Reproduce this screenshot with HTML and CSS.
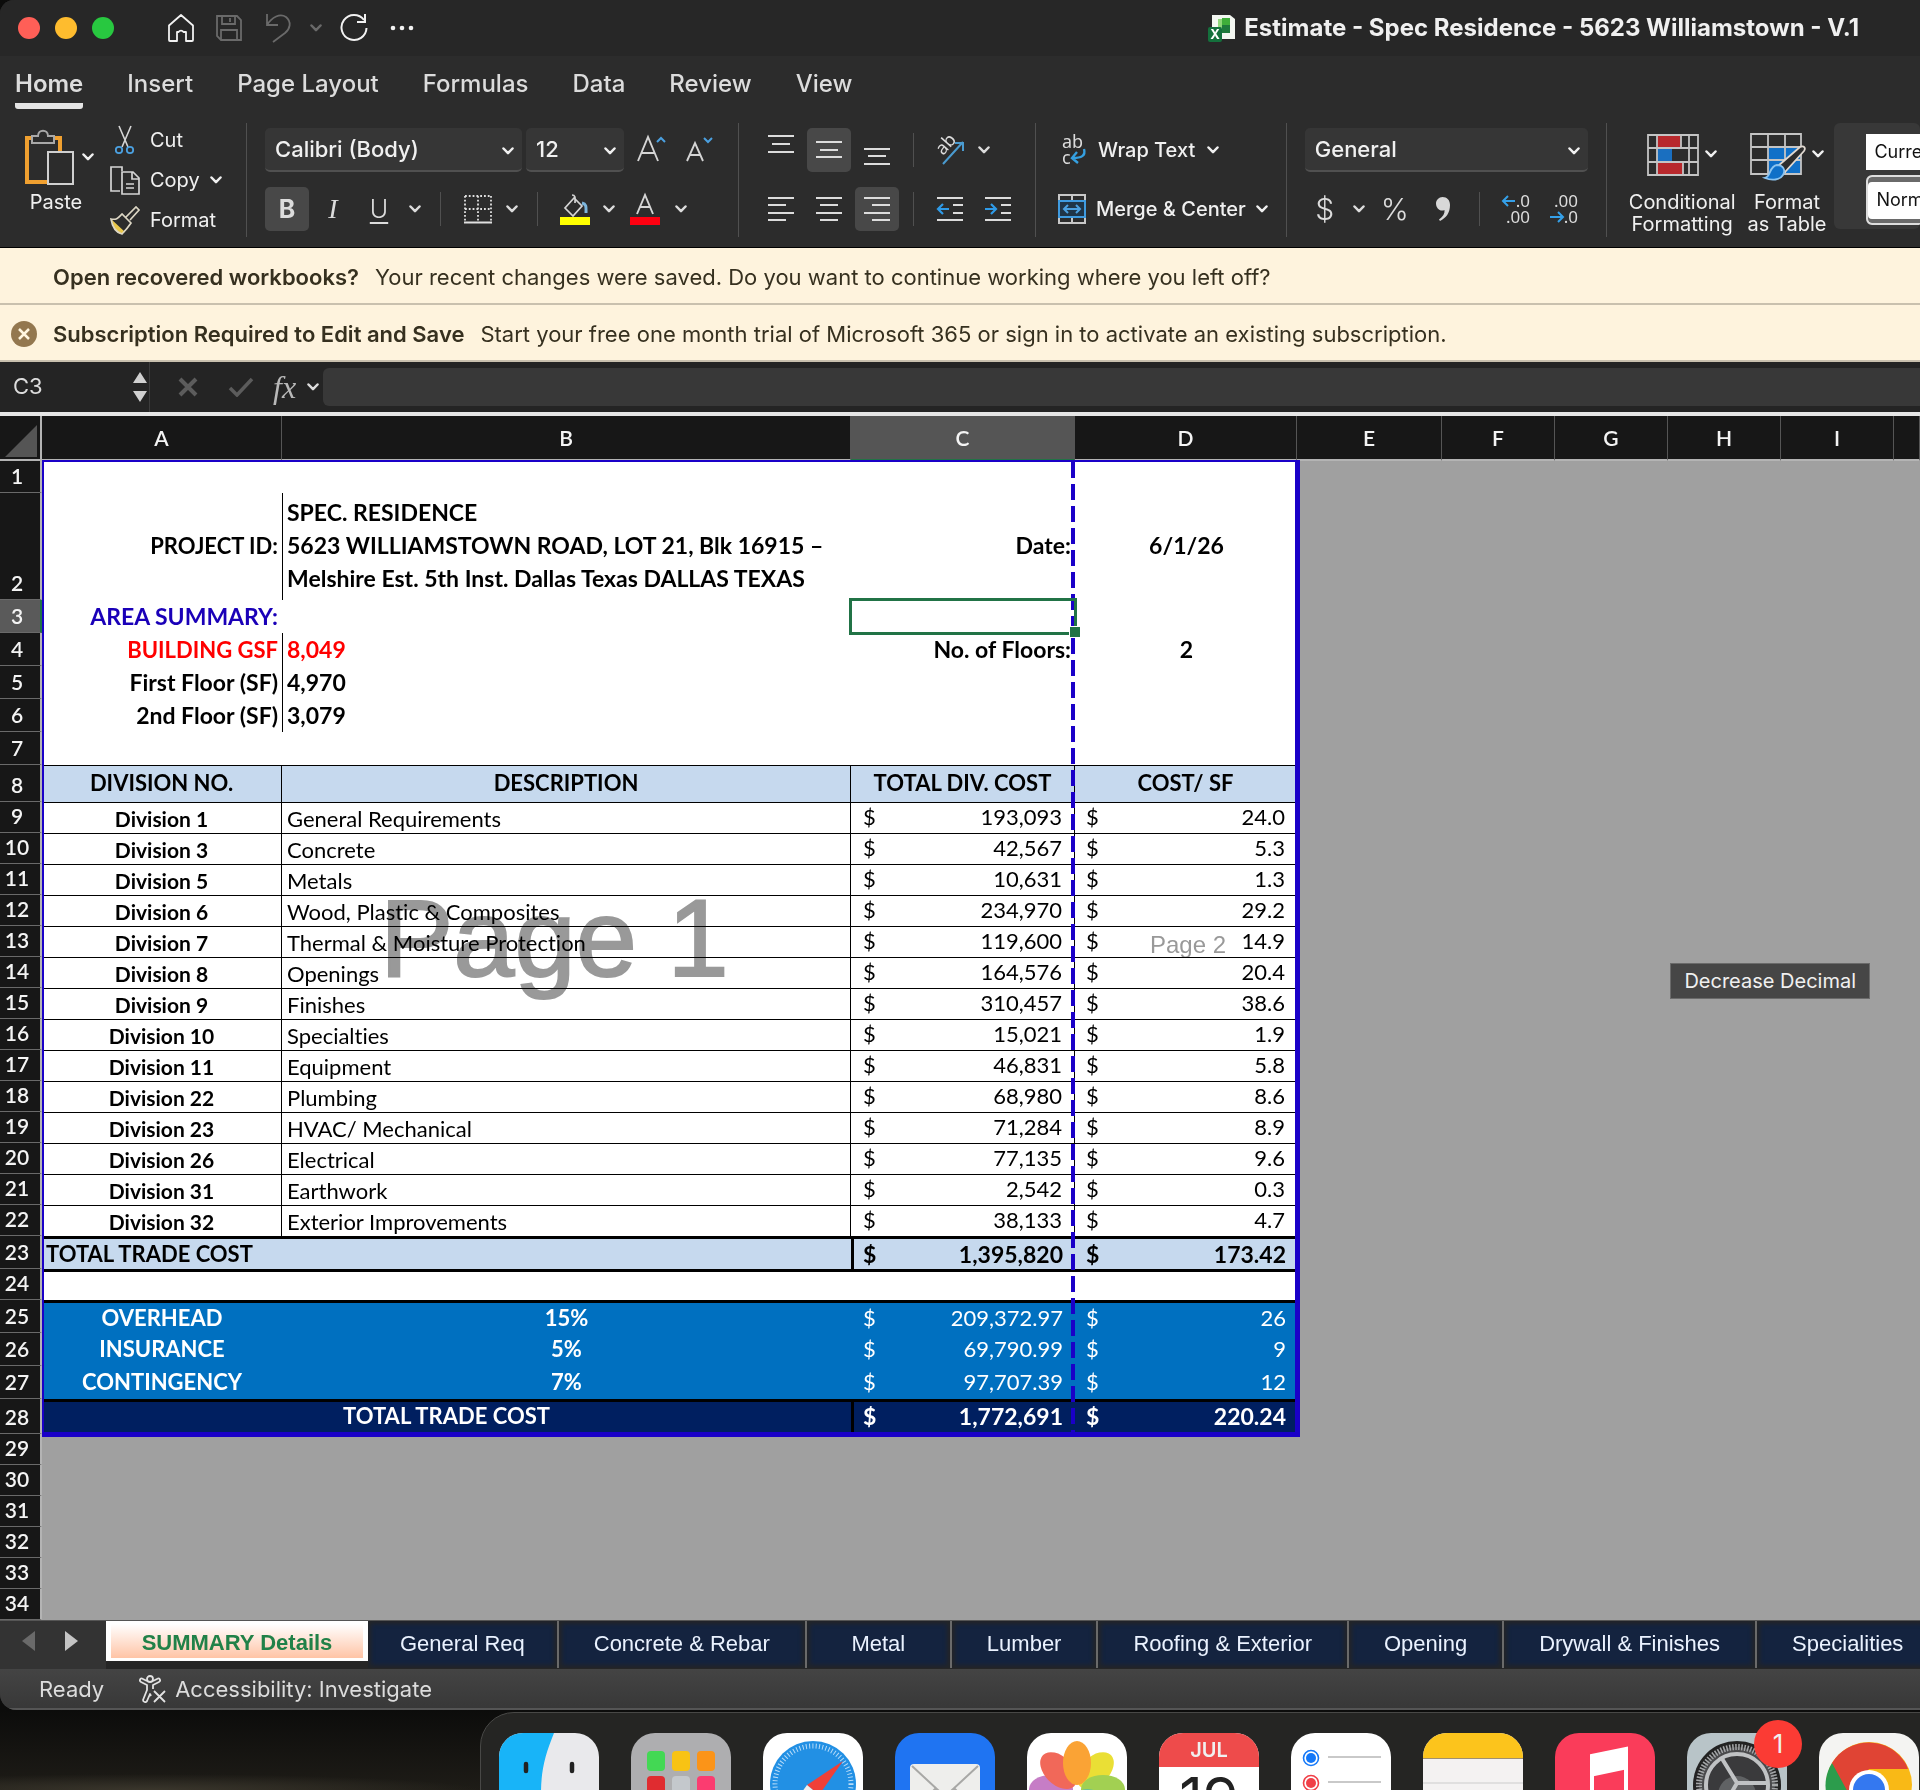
FILE: index.html
```html
<!DOCTYPE html>
<html lang="en">
<head>
<meta charset="utf-8">
<title>Estimate - Spec Residence - 5623 Williamstown - V.1</title>
<link rel="stylesheet" href="styles.css">
</head>
<body>
<svg class="defs" aria-hidden="true">
  <symbol id="chev" viewBox="0 0 12 8"><path d="M1.500 1.500 6 6.200 10.500 1.500" fill="none" stroke="currentColor" stroke-width="2.500" stroke-linecap="round" stroke-linejoin="round"/></symbol>
</svg>
<div class="window">
  <header class="titlebar">
    <div class="lights"><button class="light red" aria-label="Close"></button><button class="light amber" aria-label="Minimize"></button><button class="light green" aria-label="Zoom"></button></div>
    <div class="quick">
      <button aria-label="Home"><svg width="30" height="30" viewBox="0 0 30 30" fill="none" stroke="#f2f2f2" stroke-width="1.800" stroke-linejoin="round"><path d="M3 12.500 15 2l12 10.500V27a1 1 0 0 1-1 1h-6v-9h-2.500a3 3 0 0 0-5 0H11v9H4a1 1 0 0 1-1-1z"/></svg></button>
      <button aria-label="Save"><svg width="30" height="30" viewBox="0 0 30 30" fill="none" stroke="#6a6a6a" stroke-width="1.800"><path d="M3 3h20l4 4v20H7l-4-4z"/><path d="M8 3v8h13V3M16 5v4M7 27V17h16v10"/></svg></button>
      <button aria-label="Undo"><svg width="30" height="30" viewBox="0 0 30 30" fill="none" stroke="#6a6a6a" stroke-width="1.800"><path d="M5 1v11h11M5 12C10 4 18 0 24 4c6 5 4 12-1 16l-12 9"/></svg></button>
      <button class="tiny dim" aria-label="Undo history"><svg width="12" height="8"><use href="#chev"/></svg></button>
      <button aria-label="Redo"><svg width="30" height="30" viewBox="0 0 30 30" fill="none" stroke="#f2f2f2" stroke-width="2"><path d="M24 7A12.500 12.500 0 1 0 26.500 15M25 1v8h-8"/></svg></button>
      <button aria-label="More"><svg width="30" height="30" viewBox="0 0 30 30" fill="#f2f2f2"><circle cx="5" cy="15" r="2.300"/><circle cx="14" cy="15" r="2.300"/><circle cx="23" cy="15" r="2.300"/></svg></button>
    </div>
    <h1 class="doc-title"><svg width="28" height="28" viewBox="0 0 28 28"><path d="M4 1h18l5 4v20H4z" fill="#f3f7f1"/><path d="M10 5h4v9h-4z" fill="#8fd87a"/><path d="M14 4h8v14h-8z" fill="#3fae3a"/><path d="M14 11h8v8h-8z" fill="#1e7a3c"/><rect y="13" width="14" height="15" rx="2" fill="#14703c"/><text x="7" y="25" text-anchor="middle" class="svg-x">X</text></svg>Estimate - Spec Residence - 5623 Williamstown - V.1</h1>
  </header>

  <nav class="tabs">
    <button class="on">Home</button><button>Insert</button><button>Page Layout</button><button>Formulas</button><button>Data</button><button>Review</button><button>View</button>
  </nav>

  <div class="ribbon">
    <div class="clipboard">
      <button class="paste"><span class="big-icon"><svg width="52" height="56" viewBox="0 0 52 56" fill="none"><path d="M7 9H3v44h22" stroke="#f0a030" stroke-width="4"/><path d="M31 9h5v14" stroke="#f0a030" stroke-width="4"/><path d="M8 14V7h6c0-7 10-7 10 0h6v7z" stroke="#a8a8a8" stroke-width="2" fill="#2c2c2c"/><rect x="24" y="23" width="25" height="32" stroke="#d0d0d0" stroke-width="2" fill="#2c2c2c"/></svg><svg width="12" height="8"><use href="#chev"/></svg></span><span class="paste-label">Paste</span></button>
      <div class="clip-list">
        <button><svg width="30" height="30" viewBox="0 0 30 30" fill="none"><path d="M9 1l9 21M21 1l-9 21" stroke="#d5d5d5" stroke-width="1.600"/><circle cx="9" cy="25" r="3.200" stroke="#4ba0e0" stroke-width="1.800"/><circle cx="20" cy="25" r="3.200" stroke="#4ba0e0" stroke-width="1.800"/></svg>Cut</button>
        <button><svg width="30" height="30" viewBox="0 0 30 30" fill="none" stroke="#d5d5d5" stroke-width="1.700"><path d="M10 26H1V2h11v4"/><path d="M12 7h11l6 6v16H12z M22 7v7h7M16 19h8M16 23h8"/></svg>Copy<svg class="after" width="12" height="8"><use href="#chev"/></svg></button>
        <button><svg width="30" height="30" viewBox="0 0 30 30"><path d="M1 14l14 13-5 2-3-2C3 24 4 20 1 14z" fill="#e8c64a"/><path d="M1 14c6 1 7-1 11-5l9 9c-4 6-6 8-9 11C4 27 2 20 1 14zM16 12l10-10 3 3-9 10" fill="none" stroke="#dcd6c4" stroke-width="1.700"/></svg>Format</button>
      </div>
    </div>
    <i class="sep tall"></i>
    <div class="rows gap2">
      <div class="row first">
        <label class="pick font-pick"><select aria-label="Font"><option>Calibri (Body)</option></select><svg width="12" height="8"><use href="#chev"/></svg></label>
        <label class="pick size-pick"><select aria-label="Font size"><option>12</option></select><svg width="12" height="8"><use href="#chev"/></svg></label>
        <button class="tool" aria-label="Increase font size"><svg width="30" height="32" viewBox="0 0 30 32" fill="none"><path d="M3 27 13 3l10 24M6 19h13" stroke="#d5d5d5" stroke-width="1.900"/><path d="M22 8l4-4 4 4" stroke="#4ba0e0" stroke-width="2"/></svg></button>
        <button class="tool" aria-label="Decrease font size"><svg width="30" height="32" viewBox="0 0 30 32" fill="none"><path d="M4 27 12 9l8 18M7 21h10" stroke="#d5d5d5" stroke-width="1.900"/><path d="M21 4l4 4 4-4" stroke="#4ba0e0" stroke-width="2"/></svg></button>
      </div>
      <div class="row">
        <button class="tool on bold">B</button><button class="tool ital">I</button><button class="tool under">U</button><button class="tool drop" aria-label="Underline style"><svg width="12" height="8"><use href="#chev"/></svg></button>
        <i class="sep s1"></i>
        <button class="tool mid" aria-label="Borders"><svg width="28" height="30" viewBox="0 0 28 30" fill="none" stroke="#e0e0e0" stroke-width="1.800"><path d="M1 2h26M1 15h26M1 2v25M14 2v25M27 2v25" stroke-dasharray="1.800 2"/><path d="M0 28.500h28" stroke-width="2"/></svg></button><button class="tool drop" aria-label="Border styles"><svg width="12" height="8"><use href="#chev"/></svg></button>
        <i class="sep s1"></i>
        <button class="tool mid" aria-label="Fill color"><svg width="30" height="32" viewBox="0 0 30 32" fill="none"><path d="M12 2c4 0 3 4 3 8M14 5 5 15l8 8 9-10-8-8z" stroke="#d5d5d5" stroke-width="1.700"/><path d="M22 10c5 1 4 5 4 10" stroke="#7db6dd" stroke-width="3"/><path d="M0 24h30v8H0z" fill="#ffff00"/></svg></button><button class="tool drop" aria-label="Fill colors"><svg width="12" height="8"><use href="#chev"/></svg></button>
        <button class="tool" aria-label="Font color"><svg width="30" height="32" viewBox="0 0 30 32" fill="none"><path d="M7 21 15 2l8 19M10 14h10" stroke="#d5d5d5" stroke-width="1.900"/><path d="M0 24h30v8H0z" fill="#ff0010"/></svg></button><button class="tool drop" aria-label="Font colors"><svg width="12" height="8"><use href="#chev"/></svg></button>
      </div>
    </div>
    <i class="sep tall s20"></i>
    <div class="rows">
      <div class="row">
        <button class="tool" aria-label="Top align"><svg width="26" height="30" viewBox="0 0 26 30" stroke="#dcdcdc" stroke-width="2"><path d="M0 1h26M4 9h18M0 17h26"/></svg></button>
        <button class="tool on" aria-label="Middle align"><svg width="26" height="30" viewBox="0 0 26 30" stroke="#dcdcdc" stroke-width="2"><path d="M0 7h26M4 15h18M0 22h26"/></svg></button>
        <button class="tool" aria-label="Bottom align"><svg width="26" height="30" viewBox="0 0 26 30" stroke="#dcdcdc" stroke-width="2"><path d="M0 14h26M4 21h18M0 29h26"/></svg></button>
        <i class="sep s2"></i>
        <button class="tool" aria-label="Orientation"><svg width="32" height="32" viewBox="0 0 32 32" fill="none"><text class="svg-ab" transform="translate(9 22) rotate(-48)" x="0" y="0">ab</text><path d="M9 30 29 8M21 9h8v8" stroke="#4a9bd0" stroke-width="2"/></svg></button><button class="tool slim" aria-label="Orientation options"><svg width="12" height="8"><use href="#chev"/></svg></button>
      </div>
      <div class="row">
        <button class="tool" aria-label="Align left"><svg width="26" height="30" viewBox="0 0 26 30" stroke="#dcdcdc" stroke-width="2"><path d="M0 4h26M0 11h18M0 19h26M0 26h18"/></svg></button>
        <button class="tool" aria-label="Center"><svg width="26" height="30" viewBox="0 0 26 30" stroke="#dcdcdc" stroke-width="2"><path d="M0 4h26M4 11h18M0 19h26M4 26h18"/></svg></button>
        <button class="tool on" aria-label="Align right"><svg width="26" height="30" viewBox="0 0 26 30" stroke="#dcdcdc" stroke-width="2"><path d="M0 4h26M8 11h18M0 19h26M8 26h18"/></svg></button>
        <i class="sep s2"></i>
        <button class="tool" aria-label="Decrease indent"><svg width="26" height="30" viewBox="0 0 26 30" fill="none" stroke="#dcdcdc" stroke-width="2"><path d="M0 4h26M16 11h10M16 19h10M0 26h26"/><path d="M12 15H2M6 10l-5 5 5 5" stroke="#2f9be8" stroke-width="2.200"/></svg></button>
        <button class="tool" aria-label="Increase indent"><svg width="26" height="30" viewBox="0 0 26 30" fill="none" stroke="#dcdcdc" stroke-width="2"><path d="M0 4h26M16 11h10M16 19h10M0 26h26"/><path d="M0 15h10M6 10l5 5-5 5" stroke="#2f9be8" stroke-width="2.200"/></svg></button>
      </div>
    </div>
    <i class="sep tall s15"></i>
    <div class="rows">
      <button class="wide"><svg width="28" height="32" viewBox="0 0 28 32"><text class="svg-wrap" x="4" y="14">ab</text><text class="svg-wrap" x="4" y="30">c</text><path d="M26 15c2 7-3 9-11 9M19 18l-5 6 6 5" fill="none" stroke="#35a0e0" stroke-width="2.400"/></svg><span>Wrap Text</span><svg width="12" height="8"><use href="#chev"/></svg></button>
      <button class="wide merge"><svg width="28" height="30" viewBox="0 0 28 30" fill="none"><path d="M1 1h26v28H1zM14 1v6M14 23v6M1 7h26M1 23h26" stroke="#c8c8c8" stroke-width="2"/><path d="M1 7h26v16H1z" fill="#1f3548" stroke="#3f9be0" stroke-width="2"/><path d="M6 15h16M10 11l-4 4 4 4M18 11l4 4-4 4" stroke="#4ba0e0" stroke-width="2"/></svg><span>Merge &amp; Center</span><svg width="12" height="8"><use href="#chev"/></svg></button>
    </div>
    <i class="sep tall"></i>
    <div class="rows">
      <div class="row"><label class="pick num-pick"><select aria-label="Number format"><option>General</option></select><svg width="12" height="8"><use href="#chev"/></svg></label></div>
      <div class="row">
        <button class="tool mid sym">$</button><button class="tool slim2" aria-label="Currency options"><svg width="12" height="8"><use href="#chev"/></svg></button><button class="tool sym">%</button>
        <button class="tool" aria-label="Comma style"><svg width="16" height="28" viewBox="0 0 16 28"><path d="M7.500 2C12 2 15 5 15 10c0 8-4 13-10 16l-1-1.500c4-3 6-6 5.500-9.500C5 17 1 13 1 8.500 1 5 4 2 7.500 2z" fill="#d8d8d8"/></svg></button>
        <i class="sep s2"></i>
        <button class="tool" aria-label="Increase decimal"><svg width="30" height="34" viewBox="0 0 30 34"><text class="svg-dec" x="29" y="15" text-anchor="end">.0</text><text class="svg-dec" x="29" y="31" text-anchor="end">.00</text><path d="M14 9H2M7 4 2 9l5 5" fill="none" stroke="#35a0e8" stroke-width="2"/></svg></button>
        <button class="tool" aria-label="Decrease decimal"><svg width="30" height="34" viewBox="0 0 30 34"><text class="svg-dec" x="29" y="15" text-anchor="end">.00</text><text class="svg-dec" x="29" y="31" text-anchor="end">.0</text><path d="M1 25h13M9 20l5 5-5 5" fill="none" stroke="#35a0e8" stroke-width="2"/></svg></button>
      </div>
    </div>
    <i class="sep tall"></i>
    <div class="big-tools">
      <button class="big"><span class="big-icon"><svg width="52" height="52" viewBox="0 -6 52 52" fill="none"><path d="M10 1h24v13H10zM10 28h26v13H10z" fill="#b8282c"/><path d="M10 14h15v14H10z" fill="#1a6fc0"/><path d="M1 1h50v40H1zM1 14h50M1 28h50M10 1v40M34 1v13M36 28v13M42 1v40" stroke="#c4c4c4" stroke-width="1.800"/></svg><svg width="12" height="8"><use href="#chev"/></svg></span><span>Conditional<br>Formatting</span></button>
      <button class="big"><span class="big-icon"><svg width="56" height="52" viewBox="0 0 56 52" fill="none"><path d="M18 19h33v27H18z" fill="#1070c8"/><path d="M1 6h50v40H1zM1 19h50M1 32h50M18 6v40M35 6v40" stroke="#c4c4c4" stroke-width="1.800"/><path d="M28 38 50 19c4-2 6 1 4 4L35 44z" fill="#2c2c2c" stroke="#e0d8d0" stroke-width="1.800"/><path d="M15 50c6-1 4-12 12-13 6 0 9 5 6 10-3 5-11 6-18 3z" fill="#1070c8" stroke="#8cc4f0" stroke-width="1.800"/></svg><svg width="12" height="8"><use href="#chev"/></svg></span><span>Format<br>as Table</span></button>
    </div>
    <div class="styles-gallery"><button>Currency</button><button class="sel">Normal</button></div>
  </div>

  <div class="notice"><span class="spot"></span><p><b>Open recovered workbooks?</b>Your recent changes were saved. Do you want to continue working where you left off?</p></div>
  <div class="notice"><button class="spot" aria-label="Dismiss"><svg width="26" height="26" viewBox="0 0 26 26"><circle cx="13" cy="13" r="13" fill="#93774f"/><path d="M8 8l10 10M18 8 8 18" stroke="#fff6e0" stroke-width="2.500"/></svg></button><p><b>Subscription Required to Edit and Save</b>Start your free one month trial of Microsoft 365 or sign in to activate an existing subscription.</p></div>

  <div class="formula-bar">
    <input class="name-box" aria-label="Name box" value="C3">
    <svg class="stepper" width="14" height="32" viewBox="0 0 14 32" fill="#d0d0d0"><path d="M7 1l7 11H0zM7 31l7-11H0z"/></svg>
    <div class="fx-tools">
      <button aria-label="Cancel"><svg width="20" height="20" viewBox="0 0 20 20"><path d="M2 2l16 16M18 2 2 18" stroke="#5c5c5c" stroke-width="4"/></svg></button>
      <button aria-label="Enter"><svg width="26" height="20" viewBox="0 0 26 20"><path d="M2 11l7 7L24 2" fill="none" stroke="#5c5c5c" stroke-width="3.500"/></svg></button>
      <button class="fx"><em>fx</em><svg width="12" height="8"><use href="#chev"/></svg></button>
    </div>
    <input class="formula" aria-label="Formula">
  </div>

  <main class="sheet">
    <table>
      <colgroup><col class="c-n"><col class="c-a"><col class="c-b"><col class="c-c"><col class="c-d"><col class="c-e"><col class="c-f"><col class="c-f"><col class="c-f"><col class="c-f"><col></colgroup>
      <thead><tr><th class="corner"><svg width="32" height="32" viewBox="0 0 32 32"><path d="M32 0v32H0z" fill="#555"/></svg></th><th>A</th><th>B</th><th class="cur">C</th><th>D</th><th>E</th><th>F</th><th>G</th><th>H</th><th>I</th><th></th></tr></thead>
      <tbody class="top">
        <tr class="h32"><th>1</th><td></td><td></td><td></td><td></td></tr>
        <tr class="h107"><th>2</th><td class="r caps">PROJECT ID:</td><td class="bar">SPEC. RESIDENCE<br>5623 WILLIAMSTOWN ROAD, LOT 21, Blk 16915 –<br>Melshire Est. 5th Inst. Dallas Texas DALLAS TEXAS</td><td class="r">Date:</td><td class="c">6/1/26</td></tr>
        <tr class="h33"><th class="cur">3</th><td class="r blue">AREA SUMMARY:</td><td></td><td class="selected"><i></i></td><td></td></tr>
        <tr class="h33"><th>4</th><td class="r caps red-t">BUILDING GSF</td><td class="bar red-t">8,049</td><td class="r">No. of Floors:</td><td class="c">2</td></tr>
        <tr class="h33"><th>5</th><td class="r">First Floor (SF)</td><td class="bar">4,970</td><td></td><td></td></tr>
        <tr class="h33"><th>6</th><td class="r">2nd Floor (SF)</td><td class="bar">3,079</td><td></td><td></td></tr>
        <tr class="h33"><th>7</th><td></td><td></td><td></td><td></td></tr>
      </tbody>
      <tbody class="list">
        <tr class="head"><th>8</th><td>DIVISION NO.</td><td>DESCRIPTION</td><td>TOTAL DIV. COST</td><td>COST/ SF</td></tr>
        <tr><th>9</th><td>Division 1</td><td>General Requirements</td><td><span class="acc"><span>$</span><span>193,093</span></span></td><td><span class="acc"><span>$</span><span>24.0</span></span></td></tr>
        <tr><th>10</th><td>Division 3</td><td>Concrete</td><td><span class="acc"><span>$</span><span>42,567</span></span></td><td><span class="acc"><span>$</span><span>5.3</span></span></td></tr>
        <tr><th>11</th><td>Division 5</td><td>Metals</td><td><span class="acc"><span>$</span><span>10,631</span></span></td><td><span class="acc"><span>$</span><span>1.3</span></span></td></tr>
        <tr><th>12</th><td>Division 6</td><td>Wood, Plastic &amp; Composites</td><td><span class="acc"><span>$</span><span>234,970</span></span></td><td><span class="acc"><span>$</span><span>29.2</span></span></td></tr>
        <tr><th>13</th><td>Division 7</td><td>Thermal &amp; Moisture Protection</td><td><span class="acc"><span>$</span><span>119,600</span></span></td><td><span class="acc"><span>$</span><span>14.9</span></span></td></tr>
        <tr><th>14</th><td>Division 8</td><td>Openings</td><td><span class="acc"><span>$</span><span>164,576</span></span></td><td><span class="acc"><span>$</span><span>20.4</span></span></td></tr>
        <tr><th>15</th><td>Division 9</td><td>Finishes</td><td><span class="acc"><span>$</span><span>310,457</span></span></td><td><span class="acc"><span>$</span><span>38.6</span></span></td></tr>
        <tr><th>16</th><td>Division 10</td><td>Specialties</td><td><span class="acc"><span>$</span><span>15,021</span></span></td><td><span class="acc"><span>$</span><span>1.9</span></span></td></tr>
        <tr><th>17</th><td>Division 11</td><td>Equipment</td><td><span class="acc"><span>$</span><span>46,831</span></span></td><td><span class="acc"><span>$</span><span>5.8</span></span></td></tr>
        <tr><th>18</th><td>Division 22</td><td>Plumbing</td><td><span class="acc"><span>$</span><span>68,980</span></span></td><td><span class="acc"><span>$</span><span>8.6</span></span></td></tr>
        <tr><th>19</th><td>Division 23</td><td>HVAC/ Mechanical</td><td><span class="acc"><span>$</span><span>71,284</span></span></td><td><span class="acc"><span>$</span><span>8.9</span></span></td></tr>
        <tr><th>20</th><td>Division 26</td><td>Electrical</td><td><span class="acc"><span>$</span><span>77,135</span></span></td><td><span class="acc"><span>$</span><span>9.6</span></span></td></tr>
        <tr><th>21</th><td>Division 31</td><td>Earthwork</td><td><span class="acc"><span>$</span><span>2,542</span></span></td><td><span class="acc"><span>$</span><span>0.3</span></span></td></tr>
        <tr><th>22</th><td>Division 32</td><td>Exterior Improvements</td><td><span class="acc"><span>$</span><span>38,133</span></span></td><td><span class="acc"><span>$</span><span>4.7</span></span></td></tr>
      </tbody>
      <tbody class="totals">
        <tr class="h33 trade"><th>23</th><td colspan="2">TOTAL TRADE COST</td><td class="edge"><span class="acc"><span>$</span><span>1,395,820</span></span></td><td><span class="acc"><span>$</span><span>173.42</span></span></td></tr>
        <tr class="h31 blank"><th>24</th><td colspan="2"></td><td></td><td></td></tr>
        <tr class="h33 extra ruled"><th>25</th><td>OVERHEAD</td><td>15%</td><td><span class="acc"><span>$</span><span>209,372.97</span></span></td><td><span class="acc"><span>$</span><span>26</span></span></td></tr>
        <tr class="h33 extra"><th>26</th><td>INSURANCE</td><td>5%</td><td><span class="acc"><span>$</span><span>69,790.99</span></span></td><td><span class="acc"><span>$</span><span>9</span></span></td></tr>
        <tr class="h33 extra"><th>27</th><td>CONTINGENCY</td><td>7%</td><td><span class="acc"><span>$</span><span>97,707.39</span></span></td><td><span class="acc"><span>$</span><span>12</span></span></td></tr>
        <tr class="h35 grand"><th>28</th><td colspan="2" class="c">TOTAL TRADE COST</td><td class="edge"><span class="acc"><span>$</span><span>1,772,691</span></span></td><td><span class="acc"><span>$</span><span>220.24</span></span></td></tr>
      </tbody>
      <tbody class="outside">
        <tr><th>29</th></tr><tr><th>30</th></tr><tr><th>31</th></tr><tr><th>32</th></tr><tr><th>33</th></tr><tr><th>34</th></tr>
      </tbody>
    </table>
    <div class="print-area"><i class="page-break"></i><span class="mark one">Page 1</span><span class="mark two">Page 2</span></div>
    <div class="tooltip" role="tooltip">Decrease Decimal</div>
  </main>

  <nav class="sheet-tabs">
    <div class="arrows"><button aria-label="Previous sheet"><svg width="14" height="20" viewBox="0 0 14 20"><path d="M13 0v20L0 10z" fill="#6a6a6a"/></svg></button><button aria-label="Next sheet"><svg width="14" height="20" viewBox="0 0 14 20"><path d="M1 0v20l13-10z" fill="#c4c4c4"/></svg></button></div>
    <button class="active">SUMMARY Details</button>
    <button class="near">General Req</button><button>Concrete &amp; Rebar</button><button>Metal</button><button>Lumber</button><button>Roofing &amp; Exterior</button><button>Opening</button><button>Drywall &amp; Finishes</button><button>Specialities</button>
  </nav>
  <footer class="status"><span>Ready</span><button><svg width="28" height="28" viewBox="0 0 28 28" fill="none" stroke="#e2e2e2" stroke-width="1.800" stroke-linejoin="round"><circle cx="12" cy="4" r="3"/><path d="M9 6 4 3.500C2 3 1 6 3 7l6 3v5L5 25c0 2 3 3 4 1l3-7 1 2M15 6l5-2.500c2-.5 3 2.500 1 3.500l-6 3v4"/><path d="M16 16l11 11M27 16 16 27"/></svg>Accessibility: Investigate</button></footer>
</div>

<div class="desktop">
  <nav class="dock">
    <a href="#finder" aria-label="Finder"><svg viewBox="0 0 100 100"><path fill="#e9e9ec" d="M0 0h100v100H0z"/><path d="M0 0h55C46 22 42 38 42 60v40H0z" fill="#18b4f8"/><path d="M27 31v7M73 31v7" stroke="#222" stroke-width="4.500" stroke-linecap="round"/></svg></a>
    <a href="#launchpad" aria-label="Launchpad"><svg viewBox="0 0 100 100"><path fill="#aeaeb0" d="M0 0h100v100H0z"/><rect x="16" y="18" width="18" height="20" rx="4" fill="#43d854"/><rect x="41" y="18" width="18" height="20" rx="4" fill="#f8c314"/><rect x="66" y="18" width="18" height="20" rx="4" fill="#fb9418"/><rect x="16" y="43" width="18" height="20" rx="4" fill="#e02c30"/><rect x="41" y="43" width="18" height="20" rx="4" fill="#c4c8cc"/><rect x="66" y="43" width="18" height="20" rx="4" fill="#fb3c70"/></svg></a>
    <a href="#safari" aria-label="Safari"><svg viewBox="0 0 100 100"><path fill="#fff" d="M0 0h100v100H0z"/><circle cx="50" cy="51" r="43" fill="#2290e4"/><circle cx="50" cy="51" r="38" fill="none" stroke="#b8dcf8" stroke-width="5" stroke-dasharray="1 2.300"/><path d="M80 28 56 62 44 52z" fill="#f04038"/><path d="M56 62 44 52 20 85z" fill="#eee"/></svg></a>
    <a href="#mail" aria-label="Mail"><svg viewBox="0 0 100 100"><path fill="#1f74f2" d="M0 0h100v100H0z"/><rect x="15" y="31" width="70" height="50" rx="4" fill="#eeeeec"/><path d="M17 33l27 25q6 5 12 0l27-25M17 80l24-25M83 80 59 55" fill="none" stroke="#a8a8a6" stroke-width="2"/></svg></a>
    <a href="#photos" aria-label="Photos"><svg viewBox="0 0 100 100"><path fill="#fff" d="M0 0h100v100H0z"/><g opacity=".9"><ellipse cx="50" cy="30" rx="14" ry="22" fill="#e8dc20" transform="rotate(45 50 56)"/><ellipse cx="50" cy="30" rx="14" ry="22" fill="#98cc40" transform="rotate(90 50 56)"/><ellipse cx="50" cy="30" rx="14" ry="22" fill="#58b890" transform="rotate(135 50 56)"/><ellipse cx="50" cy="30" rx="14" ry="22" fill="#c070c0" transform="rotate(270 50 56)"/><ellipse cx="50" cy="30" rx="14" ry="22" fill="#f05848" transform="rotate(315 50 56)"/><ellipse cx="50" cy="30" rx="14" ry="22" fill="#fa9a20"/></g></svg></a>
    <a href="#calendar" aria-label="Calendar" class="cal"><span>JUL</span><strong>19</strong></a>
    <a href="#reminders" aria-label="Reminders"><svg viewBox="0 0 100 100"><path fill="#fff" d="M0 0h100v100H0z"/><circle cx="20" cy="25" r="7.500" fill="none" stroke="#1478f8" stroke-width="1.600"/><circle cx="20" cy="25" r="5" fill="#1478f8"/><circle cx="20" cy="50" r="7.500" fill="none" stroke="#f04048" stroke-width="1.600"/><circle cx="20" cy="50" r="5" fill="#f04048"/><path d="M37 24h53M37 49h53" stroke="#b8b8b8" stroke-width="1.500"/></svg></a>
    <a href="#notes" aria-label="Notes"><svg viewBox="0 0 100 100"><path fill="#f4f2f2" d="M0 0h100v100H0z"/><path fill="#fcc41c" d="M0 0h100v25H0z"/><path d="M0 25.500h100" stroke="#a09070"/><path d="M0 50h100" stroke="#ccc"/></svg></a>
    <a href="#music" aria-label="Music"><svg viewBox="0 0 100 100"><path fill="#fa3c5a" d="M0 0h100v100H0z"/><path d="M37 80V23l34-7v60" fill="none" stroke="#fff" stroke-width="4"/><path d="M35 23l38-7v20l-38 8z" fill="#fff"/></svg></a>
    <a href="#settings" aria-label="Settings"><svg viewBox="0 0 100 100"><path fill="#b8c4c8" d="M0 0h100v100H0z"/><circle cx="50" cy="52" r="44" fill="#222"/><circle cx="50" cy="52" r="38" fill="#4a4a4c" stroke="#a4a6a8" stroke-width="6" stroke-dasharray="1.500 1.500"/><circle cx="50" cy="52" r="31" fill="#3a3a3c" stroke="#c0c2c4" stroke-width="4"/><circle cx="50" cy="62" r="19" fill="#606264"/><path d="M50 50h32M50 50 34 24M50 50 34 78" stroke="#c0c2c4" stroke-width="4"/></svg><span class="badge">1</span></a>
    <a href="#chrome" aria-label="Chrome"><svg viewBox="0 0 100 100"><path fill="#f4f4f2" d="M0 0h100v100H0z"/><circle cx="50" cy="52" r="43" fill="#f9b916"/><path d="M50 52 28 90A43 43 0 0 1 13 30z" fill="#2c9c4c"/><path d="M13 30A43 43 0 0 1 87 31l2 5H50L31 63z" fill="#e04434"/><circle cx="50" cy="57" r="20" fill="#fff"/><circle cx="50" cy="57" r="16" fill="#3478f0"/></svg></a>
  </nav>
</div>
</body>
</html>
```
FILE: styles.css
```css
* { box-sizing: border-box; }
body { margin: 0; background: #0c0c0b; font-family: Inter, "Liberation Sans", sans-serif; color: #f0f0f0; overflow-x: hidden; }
button { font: inherit; color: inherit; background: none; border: 0; padding: 0; display: flex; align-items: center; justify-content: center; }
input, select { font: inherit; color: inherit; border: 0; outline: 0; }
svg { display: block; flex: none; }
.defs { position: absolute; width: 0; height: 0; }
.window { background: #2c2c2c; border-radius: 14px 0 0 16px; overflow: hidden; white-space: nowrap; }

.titlebar { display: flex; align-items: center; height: 56px; padding: 0 61px 0 18px; background: #272727; }
.lights { display: flex; gap: 15px; }
.light { width: 22px; height: 22px; border-radius: 50%; }
.red { background: #ff5f57; }
.amber { background: #febc2e; }
.green { background: #28c840; }
.quick { display: flex; align-items: center; gap: 18px; margin-left: 52px; }
.quick .tiny { width: 12px; }
.dim { color: #6a6a6a; }
.doc-title { display: flex; align-items: center; gap: 8px; margin: 0 0 0 auto; font-size: 24px; font-weight: 700; line-height: 28px; }
.svg-x { font: 700 13px Inter, sans-serif; fill: #fff; }

.tabs { display: flex; gap: 44px; height: 60px; padding: 0 15px; font-size: 24px; font-weight: 500; color: #dcdcdc; }
.tabs button { height: 53px; padding-top: 8px; border-bottom: 6px solid transparent; }
.tabs .on { font-weight: 600; background: linear-gradient(#e4e4e4, #e4e4e4) bottom / 100% 6px no-repeat border-box; border-radius: 3px; }

.ribbon { display: flex; align-items: center; height: 132px; padding: 0 0 4px 24px; font-size: 20px; border-bottom: 1px solid #000; }
.ribbon svg { overflow: visible; }
.sep { flex: none; width: 1px; height: 34px; background: #505050; }
.sep.tall { height: 114px; margin: 0 18px; }
.sep.s20 { margin: 0 20px 0 18px; }
.sep.s15 { margin: 0 22px 0 15px; }
.sep.s1 { margin: 0 15px 0 11px; }
.sep.s2 { margin: 0 10px; }
.clipboard { display: flex; align-items: center; gap: 16px; flex: none; width: 204px; }
.paste { flex-direction: column; align-items: flex-start; gap: 5px; padding-bottom: 16px; }
.big-icon { display: flex; align-items: center; gap: 6px; }
.paste-label { width: 64px; line-height: 24px; text-align: center; }
.clip-list { display: flex; flex-direction: column; gap: 8px; }
.clip-list button { justify-content: flex-start; gap: 10px; height: 32px; }
.rows { display: flex; flex-direction: column; gap: 15px; flex: none; }
.row { display: flex; align-items: center; gap: 4px; height: 44px; }
.gap2 .row { gap: 2px; }
.gap2 .row.first { gap: 4px; }
.pick { position: relative; display: block; }
.pick select { appearance: none; width: 100%; height: 44px; padding: 0 10px; background: #363636; border-bottom: 2px solid #505050; border-radius: 5px; font-size: 22px; font-weight: 500; }
.pick svg { position: absolute; right: 8px; top: 19px; }
.font-pick { width: 257px; }
.size-pick { width: 98px; }
.num-pick { width: 283px; }
.tool { flex: none; width: 44px; height: 44px; border-radius: 5px; color: #dcdcdc; font-size: 25px; }
.tool.on { background: #484848; }
.tool.mid { width: 40px; }
.tool.drop { width: 24px; }
.tool.slim { width: 16px; }
.tool.slim2 { width: 20px; }
.bold { font-weight: 700; }
.ital { font-family: "Liberation Serif", serif; font-style: italic; font-size: 28px; }
.under { font-weight: 300; text-decoration: underline; text-underline-offset: 4px; text-decoration-thickness: 2px; }
.sym { font-size: 30px; font-weight: 300; }
.svg-ab { font: 400 18px "Noto Sans", sans-serif; fill: #dcdcdc; }
.svg-wrap { font: 400 18px "Noto Sans", sans-serif; fill: #dcdcdc; }
.svg-dec { font: 400 17px "Noto Sans", sans-serif; fill: #dcdcdc; }
.wide { justify-content: flex-start; gap: 12px; height: 44px; font-weight: 500; }
.wide.merge { gap: 10px; }
.big-tools { display: flex; gap: 12px; flex: none; margin: 0 8px 0 4px; }
.big { flex-direction: column; padding-top: 4px; gap: 11px; line-height: 22px; }
.styles-gallery { display: flex; flex-direction: column; gap: 5px; flex: 1 0 80px; height: 106px; margin-bottom: 8px; padding: 11px 0 0 32px; background: #383838; border-radius: 6px; font-size: 18px; color: #111; overflow: hidden; }
.styles-gallery button { flex: none; width: 200px; height: 36px; padding: 0 8px; justify-content: flex-start; background: #fff; }
.styles-gallery .sel { height: 50px; border: 2px solid #ddd; border-radius: 6px; box-shadow: inset 0 5px #6a6a6a, inset 0 -4px #6a6a6a; }

.notice { display: flex; align-items: center; height: 57px; padding: 3px 0 0 11px; background: #fef3dd; border-bottom: 2px solid #c9c0ae; color: #36301f; font-size: 22px; }
.notice p { margin: 0; }
.notice b { font-weight: 600; margin-right: 16px; }
.spot { width: 26px; margin-right: 16px; }

.formula-bar { display: flex; align-items: center; height: 50px; background: #242424; color: #dcdcdc; }
.name-box { width: 133px; padding: 0 0 3px 13px; background: none; font-size: 22px; }
.stepper { margin-right: 2px; }
.fx-tools { display: flex; align-items: center; gap: 12px; height: 50px; padding: 0 4px 0 17px; border-left: 1px solid #3c3c3c; }
.fx-tools button { min-width: 41px; }
.fx-tools .fx { gap: 11px; font: italic 32px "Liberation Serif", serif; }
.fx em { color: #b8b8b8; }
.formula { flex: 1; height: 38px; background: #383838; border-radius: 6px 0 0 6px; }

.sheet { position: relative; background: #a0a0a0; border-top: 4px solid #e6e6e6; font-family: Lato, Carlito, sans-serif; font-size: 22px; font-variant-ligatures: none; color: #000; }
table { width: 100%; table-layout: fixed; border-spacing: 0; }
.c-n { width: 42px; }
.c-a { width: 240px; }
.c-b { width: 569px; }
.c-c { width: 224px; }
.c-d { width: 222px; }
.c-e { width: 145px; }
.c-f { width: 113px; }
th, td { padding: 0; line-height: 26px; }
th { background: #171717; color: #f4f4f4; font-size: 21px; font-weight: 600; }
thead th { height: 45px; border-right: 1px solid #555; border-bottom: 2px solid #b4b4b4; }
thead .corner { padding: 8px 4px 1px 5px; border-right: 2px solid #b4b4b4; }
thead .cur { background: #555; border-bottom-color: #217346; }
tbody th { padding: 0 6px 3px 0; border-right: 2px solid #b4b4b4; border-bottom: 1px solid #6a6a6a; vertical-align: bottom; }
tbody th.cur { background: #5a5a5a; border-right-color: #217346; }
tbody td { background: #fff; }
.h31 { height: 31px; }
.h32 { height: 32px; }
.h33 { height: 33px; }
.h35 { height: 35px; }
.h107 { height: 107px; }
.top td { padding: 0 4px 0 5px; font-size: 23px; font-weight: 700; line-height: 33px; }
.top .h107 td { padding-bottom: 2px; }
.top .caps { font-size: 22px; }
.r { text-align: right; }
.c { text-align: center; }
.blue { color: #1a00b8; }
.red-t { color: #f00; }
.top .bar { box-shadow: inset 1px 0 #000; }
.selected { position: relative; }
.selected i { position: absolute; inset: -2px -2px -2px -2px; z-index: 3; border: 3px solid #217346; }
.selected i::after { content: ""; position: absolute; right: -6px; bottom: -5px; width: 10px; height: 10px; background: #217346; border: 1px solid #fff; border-width: 1px 0 0 1px; }
.list tr { height: 31px; }
.list .head { height: 37px; }
.list td { padding-bottom: 3px; border-top: 1px solid #000; border-right: 1px solid #000; }
.list td:nth-child(2) { text-align: center; font-size: 21px; font-weight: 700; }
.list td:nth-child(3) { padding-left: 5px; }
.list .head td { background: #c6d9ee; padding: 0 0 2px; text-align: center; font-size: 22px; font-weight: 700; }
.list tr:not(.head) td:nth-child(-n+3) { padding-bottom: 1px; vertical-align: bottom; }
.acc { display: flex; justify-content: space-between; padding: 0 12px; }
td:last-child .acc { padding: 0 11px; }
.totals td { padding-bottom: 1px; font-weight: 700; }
.trade td { background: #c6d9ee; border-top: 3px solid #000; padding-left: 4px; }
.trade .edge, .grand .edge { border-left: 3px solid #000; }
.trade td:not(:nth-child(2)), .grand td:not(:nth-child(2)) { padding-left: 0; }
.trade .edge .acc, .grand .edge .acc { padding-left: 9px; }
.trade .acc, .grand .acc { font-size: 23px; }
.blank td, .ruled td { border-top: 3px solid #000; }
.extra td { background: #0070c0; color: #fff; text-align: center; }
.extra .acc { font-weight: 400; }
.totals .grand td { padding-bottom: 5px; background: #001f60; color: #fff; border-top: 3px solid #000; }
.outside tr { height: 31px; }
.print-area { position: absolute; left: 42px; top: 44px; width: 1258px; height: 977px; border: solid #1a00c8; border-width: 2px 5px 5px 2px; pointer-events: none; }
.page-break { position: absolute; left: 1027px; top: 0; bottom: 0; width: 4px; background: repeating-linear-gradient(#1a00c8 0 16px, transparent 16px 22px); }
.mark { position: absolute; font-family: "Liberation Sans", Arial, sans-serif; color: #999; mix-blend-mode: multiply; line-height: 1; }
.one { left: 336px; top: 421px; font-size: 110px; -webkit-text-stroke: 2px #999; }
.two { left: 1106px; top: 471px; font-size: 24px; }
.tooltip { position: absolute; right: 50px; top: 547px; padding: 0 13px; background: #464646; border: 1px solid #6a6a6a; color: #f0f0f0; font: 400 20px/34px Inter, sans-serif; }

.sheet-tabs { display: flex; height: 49px; background: #262626; border-top: 1px solid #555; font-family: "Liberation Sans", Arial, sans-serif; font-size: 22px; overflow: hidden; }
.arrows { display: flex; gap: 28px; width: 106px; padding: 0 0 8px 22px; flex: none; background: #333; }
.sheet-tabs > button { flex: none; min-width: 145px; height: 47px; padding: 0 35px 2px; background: #14233f; border-right: 2px solid #6a6a6a; box-shadow: inset 0 0 4px 3px #232528; color: #eaf2ff; }
.sheet-tabs > .near { padding: 0 32px 2px; }
.sheet-tabs > .active { width: 262px; height: 40px; padding: 3px 0 0; background: linear-gradient(#fff, #ffc4a6); border: solid #fff; border-width: 3px 5px; box-shadow: none; color: #218148; font-weight: 700; }
.status { display: flex; align-items: center; gap: 34px; height: 41px; padding-left: 39px; background: linear-gradient(#444, #383838); border-bottom: 2px solid #555; font-size: 22px; color: #dcdcdc; }
.status button { gap: 9px; }

.desktop { height: 80px; padding-left: 480px; background: radial-gradient(ellipse 330px 16px at 150px 80px, #3a362c, transparent), linear-gradient(#0c0c0b, #1e1c17); overflow: hidden; }
.dock { display: flex; gap: 32px; width: max-content; height: 140px; margin-top: 2px; padding: 20px 18px; background: #252523; border: 1px solid #484846; border-radius: 34px 0 0 0; }
.dock a { position: relative; width: 100px; height: 100px; flex: none; color: inherit; text-decoration: none; }
.dock svg { width: 100px; height: 100px; border-radius: 24px; }
.dock .cal { display: flex; flex-direction: column; align-items: center; background: #fff; border-radius: 24px; overflow: hidden; font-size: 20px; font-weight: 600; line-height: 34px; }
.cal span { width: 100%; background: #ee4b4b; text-align: center; }
.cal strong { color: #222; font-size: 58px; font-weight: 400; line-height: 62px; }
.badge { position: absolute; right: -15px; top: -13px; width: 48px; height: 48px; border-radius: 50%; background: #fb3b34; font-size: 26px; line-height: 48px; text-align: center; }
```
